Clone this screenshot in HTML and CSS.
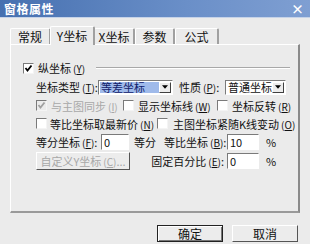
FILE: index.html
```html
<!DOCTYPE html>
<html lang="zh">
<head>
    <meta charset="UTF-8">
    <title>窗格属性</title>
    <link rel="stylesheet" href="styles.css">
</head>
<body>
    <div class="window">
        <div class="titlebar">
            <span class="title">窗格属性</span>
            <span class="close">×</span>
        </div>

        <div class="tabs">
            <div class="tab w-changgui">常规</div>
            <div class="tab active">Y坐标</div>
            <div class="tab w-x">X坐标</div>
            <div class="tab w-param">参数</div>
            <div class="tab w-formula">公式</div>
        </div>

        <div class="panel">
            <div class="group-head">
                <span class="cb checked"><svg viewBox="0 0 9 9"><path d="M1.5 4 L3.5 6.5 L7.5 1.5" /></svg></span>
                <span class="head-label">纵坐标<span class="key">(<u>Y</u>)</span></span>
                <span class="rule"></span>
            </div>

            <div class="row">
                <span class="lbl w62">坐标类型<span class="key">(<u>T</u>)</span>:</span>
                <span class="select w75">
                    <span class="sel-text hl">等差坐标</span>
                    <span class="drop"><svg viewBox="0 0 7 4"><path d="M0 0 H7 L3.5 4 Z" /></svg></span>
                </span>
                <span class="lbl w46 ml6">性质<span class="key">(<u>P</u>)</span>:</span>
                <span class="select w61">
                    <span class="sel-text">普通坐标</span>
                    <span class="drop"><svg viewBox="0 0 7 4"><path d="M0 0 H7 L3.5 4 Z" /></svg></span>
                </span>
            </div>

            <div class="row tall">
                <span class="cb checked disabled"><svg viewBox="0 0 9 9"><path d="M1.5 4 L3.5 6.5 L7.5 1.5" /></svg></span>
                <span class="lbl gray ml4 w72">与主图同步<span class="key">(<u>I</u>)</span></span>
                <span class="cb"></span>
                <span class="lbl ml4 w79">显示坐标线<span class="key">(<u>W</u>)</span></span>
                <span class="cb"></span>
                <span class="lbl ml4">坐标反转<span class="key">(<u>R</u>)</span></span>
            </div>

            <div class="row short">
                <span class="cb"></span>
                <span class="lbl ml3 w107">等比坐标取最新价<span class="key">(<u>N</u>)</span></span>
                <span class="cb"></span>
                <span class="lbl ml5">主图坐标紧随K线变动<span class="key">(<u>O</u>)</span></span>
            </div>

            <div class="row tall">
                <span class="lbl w65">等分坐标<span class="key">(<u>F</u>)</span>:</span>
                <span class="input w28">0</span>
                <span class="lbl ml5 w30">等分</span>
                <span class="lbl w60 right">等比坐标<span class="key">(<u>B</u>)</span>:</span>
                <span class="input w32 ml3">10</span>
                <span class="lbl ml7">%</span>
            </div>

            <div class="row tall">
                <span class="btn disabled-btn w94">自定义Y坐标<span class="key">(<u>C</u>)</span>...</span>
                <span class="lbl w94 right">固定百分比<span class="key">(<u>E</u>)</span>:</span>
                <span class="input w32 ml3">0</span>
                <span class="lbl ml7">%</span>
            </div>
        </div>

        <div class="actions">
            <span class="btn default">确定</span>
            <span class="btn">取消</span>
        </div>
    </div>
</body>
</html>
```

FILE: styles.css
```css
body {
    margin: 0;
    padding: 0;
    background: #ebebeb;
    font-family: "Noto Sans CJK SC", "Liberation Sans", sans-serif;
    font-size: 11px;
    color: #111;
}

.window {
    width: 310px;
    height: 244px;
    overflow: hidden;
}

/* title bar */
.titlebar {
    height: 17px;
    display: flex;
    align-items: center;
    justify-content: space-between;
    padding: 0 6px 0 4px;
    background: linear-gradient(to right, #4670b0, #6a8fc8 60%, #7f9fd2);
    border-bottom: 1px solid #c6d3e8;
    color: #fff;
}

.title {
    font-weight: bold;
    font-size: 12px;
    letter-spacing: 0.5px;
}

.close {
    font-weight: bold;
    font-size: 13px;
    line-height: 1;
}

/* tabs */
.tabs {
    display: flex;
    align-items: flex-end;
    height: 18px;
    margin-top: 8px;
    padding-left: 10px;
}

.tab {
    height: 16px;
    line-height: 16px;
    text-align: center;
    font-size: 12px;
    border-top: 1px solid #fff;
    border-left: 1px solid #fff;
    border-right: 2px solid #a0a0a0;
    border-radius: 2px 2px 0 0;
    box-sizing: border-box;
}

.tab.active {
    height: 19px;
    line-height: 18px;
    width: 45px;
    margin: 0 -1px;
    background: #ebebeb;
    position: relative;
    z-index: 1;
    margin-bottom: -1px;
}

.w-changgui { width: 41px; }
.w-x { width: 41px; }
.w-param { width: 40px; }
.w-formula { width: 44px; }

/* panel */
.panel {
    margin: 0 10px 0 10px;
    height: 169px;
    box-sizing: border-box;
    border-top: 1px solid #fff;
    border-left: 1px solid #fff;
    border-right: 2px solid #8a8a8a;
    border-bottom: 2px solid #9a9a9a;
    padding: 16px 8px 0 12px;
}

.group-head {
    display: flex;
    align-items: center;
    height: 14px;
    margin-bottom: 3px;
}

.head-label {
    margin-left: 4px;
    width: 58px;
    white-space: nowrap;
}

.rule {
    flex: 1;
    height: 0;
    border-top: 1px solid #a8a8a8;
    border-bottom: 1px solid #fff;
}

.row {
    display: flex;
    align-items: center;
    height: 18px;
    padding-left: 13px;
    white-space: nowrap;
}

.row.tall { height: 19px; }
.row.short { height: 17px; }

/* mnemonic like (T) */
.key {
    font-size: 10px;
    margin-left: 2px;
}

.key u {
    text-decoration: underline;
}

.gray { color: #a8a8a8; }
.right { text-align: right; }

.w28 { width: 28px; }
.w30 { width: 30px; }
.w32 { width: 32px; }
.w46 { width: 46px; }
.w60 { width: 60px; }
.w61 { width: 61px; }
.w62 { width: 62px; }
.w65 { width: 65px; }
.w72 { width: 72px; }
.w75 { width: 75px; }
.w79 { width: 79px; }
.w94 { width: 94px; }
.w107 { width: 107px; }

.ml3 { margin-left: 3px; }
.ml4 { margin-left: 4px; }
.ml5 { margin-left: 5px; }
.ml6 { margin-left: 6px; }
.ml7 { margin-left: 7px; }

.lbl {
    display: inline-block;
    flex-shrink: 0;
}

/* checkbox */
.cb {
    width: 9px;
    height: 9px;
    flex-shrink: 0;
    background: #fff;
    border: 1px solid;
    border-color: #7a7a7a #f4f4f4 #f4f4f4 #7a7a7a;
    display: inline-flex;
}

.cb svg {
    width: 9px;
    height: 9px;
    fill: none;
    stroke: #000;
    stroke-width: 1.8;
}

.cb.disabled {
    background: #ebebeb;
}

.cb.disabled svg {
    stroke: #a0a0a0;
}

/* select */
.select {
    display: flex;
    height: 15px;
    box-sizing: border-box;
    flex-shrink: 0;
    background: #fff;
    border: 1px solid;
    border-color: #7a7a7a #fff #fff #7a7a7a;
    padding: 1px;
}

.sel-text {
    flex: 1;
    line-height: 11px;
    padding-left: 1px;
    font-size: 11px;
}

.sel-text.hl {
    background: #9fbaea;
    color: #10206a;
}

.drop {
    width: 12px;
    background: #ececec;
    border: 1px solid;
    border-color: #fff #404040 #404040 #fff;
    box-sizing: border-box;
    display: flex;
    align-items: center;
    justify-content: center;
}

.drop svg {
    width: 6px;
    height: 4px;
    fill: #000;
}

/* text input */
.input {
    height: 16px;
    line-height: 14px;
    box-sizing: border-box;
    flex-shrink: 0;
    background: #fff;
    border: 1px solid;
    border-color: #7a7a7a #fff #fff #7a7a7a;
    padding-left: 2px;
}

/* buttons */
.btn {
    display: inline-flex;
    align-items: center;
    justify-content: center;
    height: 17px;
    box-sizing: border-box;
    background: #ececec;
    border: 1px solid;
    border-color: #fff #555 #555 #fff;
    flex-shrink: 0;
}

.disabled-btn {
    color: #a8a8a8;
    height: 18px;
    margin-top: 1px;
}

.actions {
    display: flex;
    justify-content: flex-end;
    gap: 9px;
    margin-top: 12px;
    padding-right: 12px;
}

.actions .btn {
    width: 66px;
    font-size: 12px;
}

.actions .btn.default {
    border: 1px solid #222;
    box-shadow: inset 1px 1px 0 #fff, inset -1px -1px 0 #777;
}
```
